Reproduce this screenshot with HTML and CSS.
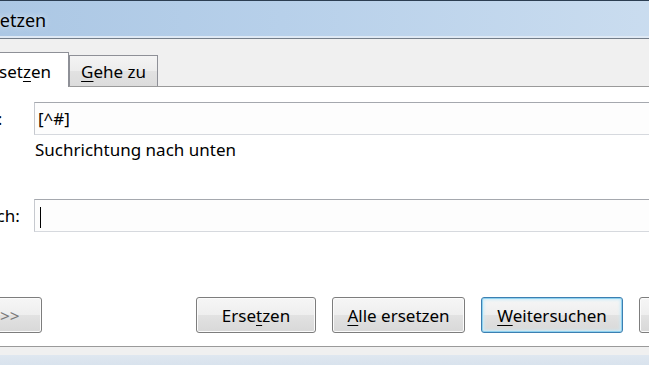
FILE: index.html
```html
<!DOCTYPE html>
<html lang="de">
<head>
  <meta charset="UTF-8" />
  <title>Suchen und Ersetzen</title>
  <link rel="stylesheet" href="styles.css">
</head>
<body>

<div class="dialog">
  <div class="titlebar">
    <span class="title">Suchen und Ersetzen</span>
  </div>

  <div class="body">
    <div class="tabs">
      <div class="tab"><u>S</u>uchen</div>
      <div class="tab active">Erset<u>z</u>en</div>
      <div class="tab"><u>G</u>ehe zu</div>
    </div>

    <div class="page">
      <div class="form">
        <label class="label">Suche<u>n</u> nach:</label>
        <div class="field">[^#]</div>

        <div class="hint">Suchrichtung nach unten</div>

        <label class="label label-replace">Ersetzen d<u>u</u>rch:</label>
        <div class="field field-replace"><span class="caret"></span></div>
      </div>

      <div class="buttons">
        <button class="btn btn-more">Erweitern &gt;&gt;</button>
        <div class="btn-group">
          <button class="btn btn-replace">Erse<u>t</u>zen</button>
          <button class="btn btn-all"><u>A</u>lle ersetzen</button>
          <button class="btn btn-next default"><u>W</u>eitersuchen</button>
          <button class="btn btn-cancel">Abbrechen</button>
        </div>
      </div>
    </div>
  </div>

  <div class="frame"></div>
</div>

</body>
</html>
```

FILE: styles.css
```css
body {
  margin: 0;
  padding: 0;
  overflow: hidden;
  background: #f0f0f0;
  font-family: "Noto Sans", "Open Sans", sans-serif;
  font-size: 17px;
  color: #000;
}

u {
  text-decoration-thickness: 1px;
  text-underline-offset: 3px;
}

/* the dialog is wider than the window, its left part is cut off */
.dialog {
  width: 935px;
  margin-left: -140px;
}

.titlebar {
  height: 37px;
  border-top: 1px solid #2c3e52;
  border-bottom: 1px solid #737d89;
  background: linear-gradient(to right, #a6c3e1 0%, #b7d0ea 45%, #d1e1f1 100%);
  box-shadow: inset 0 -2px 0 #dfe9f4;
  padding-left: 9px;
}

.title {
  display: inline-block;
  padding-top: 4px;
  line-height: 31px;
  font-size: 18px;
  color: #000;
  text-shadow: 0 0 6px rgba(255, 255, 255, 0.8);
}

.body {
  background: #f0f0f0;
  padding: 0 10px 8px;
}

.tabs {
  display: flex;
  align-items: flex-end;
  height: 47px;
  padding-left: 12px;
}

.tab {
  height: 31px;
  box-sizing: border-box;
  padding: 4px 11px 0;
  line-height: 23px;
  border: 1px solid #8e9097;
  border-bottom: none;
  background: linear-gradient(#f4f4f4 0%, #ececec 50%, #e2e2e2 51%, #dcdcdc 100%);
}

.tab + .tab {
  border-left: none;
}

.tab.active {
  height: 35px;
  margin-bottom: -1px;
  padding: 7px 17px 0;
  background: #fff;
  border-left: 1px solid #8e9097;
  position: relative;
}

.tab.active + .tab {
  border-left: 1px solid #8e9097;
}

.page {
  background: #fff;
  border: 1px solid #9a9a9a;
  padding: 15px 25px 13px;
}

.form {
  display: grid;
  grid-template-columns: 138px 1fr;
}

.label {
  align-self: center;
  white-space: nowrap;
}

.field {
  height: 33px;
  box-sizing: border-box;
  border: 1px solid #c6c9cf;
  border-top-color: #a5a8ae;
  border-bottom-color: #d6d9de;
  background: #fdfdfd;
  padding-left: 3px;
  line-height: 31px;
  white-space: nowrap;
}

.hint {
  grid-column: 2;
  margin: 3px 0 0 1px;
  line-height: 23px;
}

.label-replace,
.field-replace {
  margin-top: 38px;
}

.caret {
  display: inline-block;
  width: 1px;
  height: 21px;
  margin-left: 2px;
  background: #000;
  vertical-align: middle;
}

.buttons {
  display: flex;
  margin-top: 65px;
}

.btn-group {
  display: flex;
  gap: 16px;
  margin-left: auto;
}

.btn {
  height: 36px;
  padding: 0;
  font-family: inherit;
  font-size: 17px;
  color: #000;
  border: 1px solid #7d7d7d;
  border-radius: 3px;
  background: linear-gradient(#f6f6f6 0%, #eeeeee 50%, #e2e2e2 51%, #d8d8d8 100%);
  box-shadow: inset 0 0 0 1px #fbfbfb;
}

.btn-more {
  width: 146px;
  color: #7a7a7a;
}

.btn-replace,
.btn-cancel {
  width: 120px;
}

.btn-all {
  width: 133px;
}

.btn-next {
  width: 142px;
}

.btn.default {
  border-color: #3c7fb1;
  box-shadow: inset 0 0 0 1px #8fd1ef, inset 0 0 3px 2px #cdebf8;
}

.frame {
  height: 14px;
  background: linear-gradient(#dfe7f0, #d6e1ec);
}
```
